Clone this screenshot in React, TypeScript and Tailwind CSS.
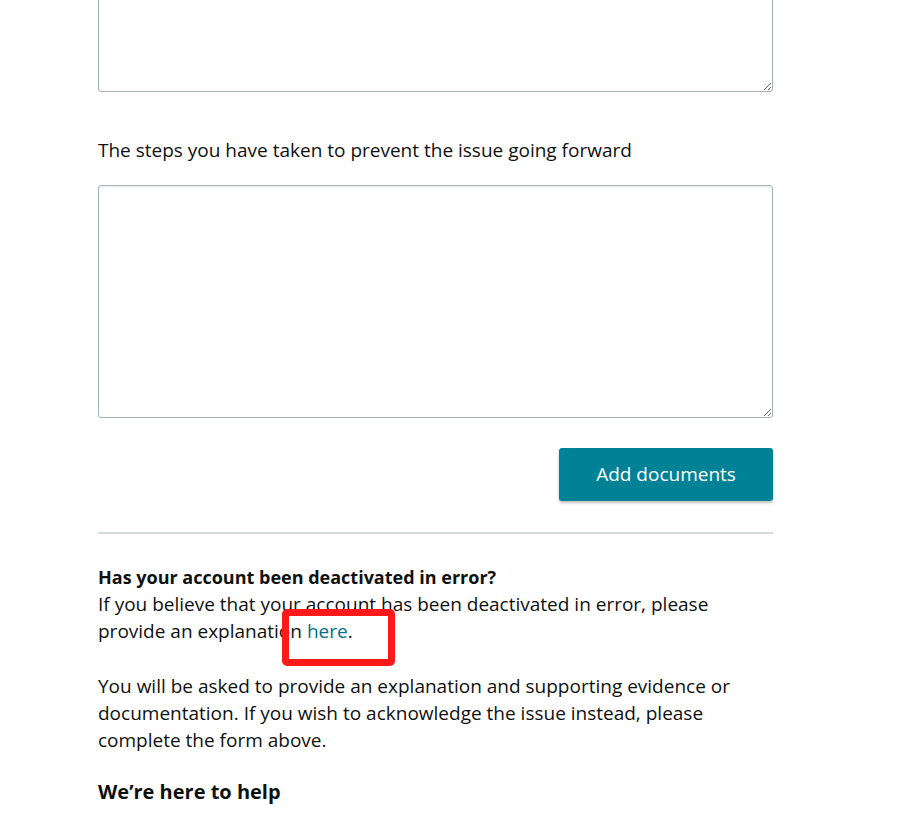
export default function App() {
  return (
    <div className="min-h-screen bg-white font-['Open_Sans',Arial,sans-serif] text-[#0f1111]">
      <div className="relative mx-[98px] -mt-[150px] w-[675px]">
        {/* previous field */}
        <textarea className="block h-[242px] w-full rounded-[3px] border border-[#a6b3b4] bg-white shadow-[inset_0_1px_2px_rgba(15,17,17,0.1)] outline-none" />

        <p className="mt-[45px] text-[19px] leading-[27px]">The steps you have taken to prevent the issue going forward</p>

        <textarea className="mt-[21px] block h-[233px] w-full rounded-[3px] border border-[#a6b3b4] bg-white shadow-[inset_0_1px_2px_rgba(15,17,17,0.1)] outline-none" />

        <div className="mt-[30px] flex justify-end">
          <button className="h-[53px] w-[214px] rounded-[3px] bg-[#008296] text-[19px] font-medium text-white shadow-[0_2px_3px_rgba(0,0,0,0.25)]">
            Add documents
          </button>
        </div>

        <hr className="mt-[31px] border-t-2 border-[#d5dbdb]" />

        <h3 className="mt-[30px] text-[18px] font-bold leading-[27px]">Has your account been deactivated in error?</h3>
        <p className="text-[19px] leading-[27px]">
          If you believe that your account has been deactivated in error, please provide an explanation{' '}
          <a href="#" className="text-[#007185]">here</a>.
        </p>

        <p className="mt-[28px] text-[19px] leading-[27px]">
          You will be asked to provide an explanation and supporting evidence or documentation. If you wish to acknowledge the issue instead, please complete the form above.
        </p>

        <h3 className="mt-[24px] text-[20px] font-bold leading-[27px]">We’re here to help</h3>
        <div className="h-[40px]" />

        {/* annotation overlay */}
        <div className="pointer-events-none absolute left-[184px] top-[759px] h-[57px] w-[113px] rounded-[5px] border-[7px] border-[#ff1a1a]" />
      </div>
    </div>
  );
}
